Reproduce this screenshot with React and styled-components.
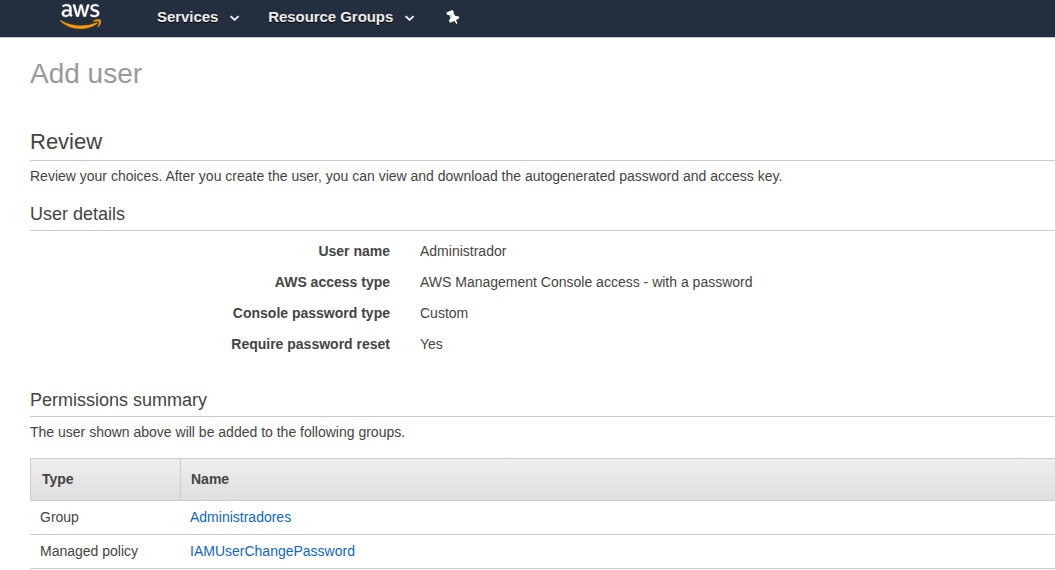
import React from "react";
import styled, { createGlobalStyle } from "styled-components";
import { FaAws } from "react-icons/fa";

const GlobalStyle = createGlobalStyle`
  * { box-sizing: border-box; }
  html, body { margin: 0; padding: 0; background: #fff; }
  body {
    overflow: hidden;
    color: #444;
    font: 14px/20px "Liberation Sans", Arial, Helvetica, sans-serif;
  }
  h1, h2, h3, p, dl, dt, dd { margin: 0; font-weight: normal; }
`;

const NavBar = styled.header`
  display: flex;
  align-items: flex-start;
  height: 38px;
  padding-left: 60px;
  background: #232f3e;
  border-bottom: 1px solid #c3c6ca;
`;

const Logo = styled.a`
  display: flex;
  width: 41px;
  height: 33px;
  margin-right: 56px;
`;

const LogoMark = styled(FaAws)`
  flex: none;
  width: 41px;
  height: 33px;
  path {
    fill: url(#logo-fill);
    stroke: url(#logo-fill);
    stroke-width: 5;
  }
`;

const Gradients = styled.svg`
  flex: none;
  width: 0;
  height: 0;
`;

const NavItem = styled.a`
  display: flex;
  align-items: center;
  height: 34px;
  margin-right: ${(p) => p.$gap}px;
  color: #eee;
  font-size: 15px;
  font-weight: bold;
  line-height: 34px;
  letter-spacing: -0.06px;
  text-shadow: 0 1px 0 #000;
  white-space: nowrap;
`;

const Chevron = styled.svg`
  width: 10px;
  height: 7px;
  margin: 3px 0 0 12px;
`;

const Pin = styled.svg`
  width: 14px;
  height: 15px;
  margin-top: 10px;
`;

const Page = styled.main`
  padding: 20px 0 0 30px;
`;

const Title = styled.h1`
  height: 72px;
  color: #999;
  font-size: 28px;
  line-height: 31px;
`;

const Heading = styled.h2`
  height: 31px;
  border-bottom: 1px solid #ccc;
  font-size: 22px;
  line-height: 24px;
`;

const SubHeading = styled.h3`
  height: 27px;
  border-bottom: 1px solid #ccc;
  font-size: 18px;
  line-height: 20px;
`;

const Intro = styled.p`
  padding: 5px 0 ${(p) => p.$after}px;
`;

const Details = styled.dl`
  display: grid;
  grid-template-columns: 360px 1fr;
  grid-auto-rows: 20px;
  gap: 11px 30px;
  padding: 10px 0 36px;
`;

const Label = styled.dt`
  && { font-weight: bold; }
  text-align: right;
`;

const Table = styled.div`
  display: grid;
`;

const Row = styled.div`
  display: grid;
  grid-template-columns: 150px 1fr;
  height: 34px;
  border-bottom: 1px solid #ccc;
`;

const HeadRow = styled(Row)`
  height: 43px;
  border-top: 1px solid #ccc;
  background: linear-gradient(#eee, #dfdfdf);
  font-weight: bold;
`;

const HeadCell = styled.div`
  padding: 10px;
  padding-left: ${(p) => (p.$first ? 11 : 10)}px;
  border-left: 1px solid #ccc;
`;

const Cell = styled.div`
  padding: 6px 10px;
`;

const Link = styled.a`
  color: #1166bb;
`;

const DownArrow = () => (
  <Chevron viewBox="0 0 10 7" aria-hidden="true">
    <path d="M.6 1.9 4.6 5.7 8.6 1.9" fill="none" stroke="#000" strokeOpacity=".5" strokeWidth="1.8" />
    <path d="M.6 1.1 4.6 4.9 8.6 1.1" fill="none" stroke="#eee" strokeWidth="2" />
  </Chevron>
);

const details = [
  ["User name", "Administrador"],
  ["AWS access type", "AWS Management Console access - with a password"],
  ["Console password type", "Custom"],
  ["Require password reset", "Yes"],
];

const permissions = [
  ["Group", "Administradores"],
  ["Managed policy", "IAMUserChangePassword"],
];

export default function App() {
  return (
    <>
      <GlobalStyle />
      <NavBar>
        <Logo aria-label="aws">
          <LogoMark />
          <Gradients>
            <linearGradient id="logo-fill" x1="0" y1="0" x2="0" y2="1">
              <stop offset=".62" stopColor="#fff" />
              <stop offset=".62" stopColor="#f90" />
            </linearGradient>
          </Gradients>
        </Logo>
        <NavItem $gap={28}>
          Services
          <DownArrow />
        </NavItem>
        <NavItem $gap={31}>
          Resource Groups
          <DownArrow />
        </NavItem>
        <Pin viewBox="0 0 14 15" aria-label="Pin">
          <path
            d="M0.4 2.6 6.4 0 8 1.9 7.4 3 9.4 6 12.6 6.2 13.4 8.3 10 10 11.4 13.2 10.7 13.9 8.2 10.9 3.9 12.8 2.9 10.6 4.6 8 3 5 1 4.7Z"
            fill="#fff"
          />
          <path d="M4.2 4.5 5.5 7.3" stroke="#7b828c" strokeWidth=".8" />
        </Pin>
      </NavBar>
      <Page>
        <Title>Add user</Title>
        <Heading>Review</Heading>
        <Intro $after={18}>
          Review your choices. After you create the user, you can view and download the autogenerated
          password and access key.
        </Intro>
        <SubHeading>User details</SubHeading>
        <Details>
          {details.map(([label, value]) => (
            <React.Fragment key={label}>
              <Label>{label}</Label>
              <dd>{value}</dd>
            </React.Fragment>
          ))}
        </Details>
        <SubHeading>Permissions summary</SubHeading>
        <Intro $after={16}>The user shown above will be added to the following groups.</Intro>
        <Table>
          <HeadRow>
            <HeadCell $first>Type</HeadCell>
            <HeadCell>Name</HeadCell>
          </HeadRow>
          {permissions.map(([type, name]) => (
            <Row key={name}>
              <Cell>{type}</Cell>
              <Cell>
                <Link>{name}</Link>
              </Cell>
            </Row>
          ))}
        </Table>
      </Page>
    </>
  );
}
